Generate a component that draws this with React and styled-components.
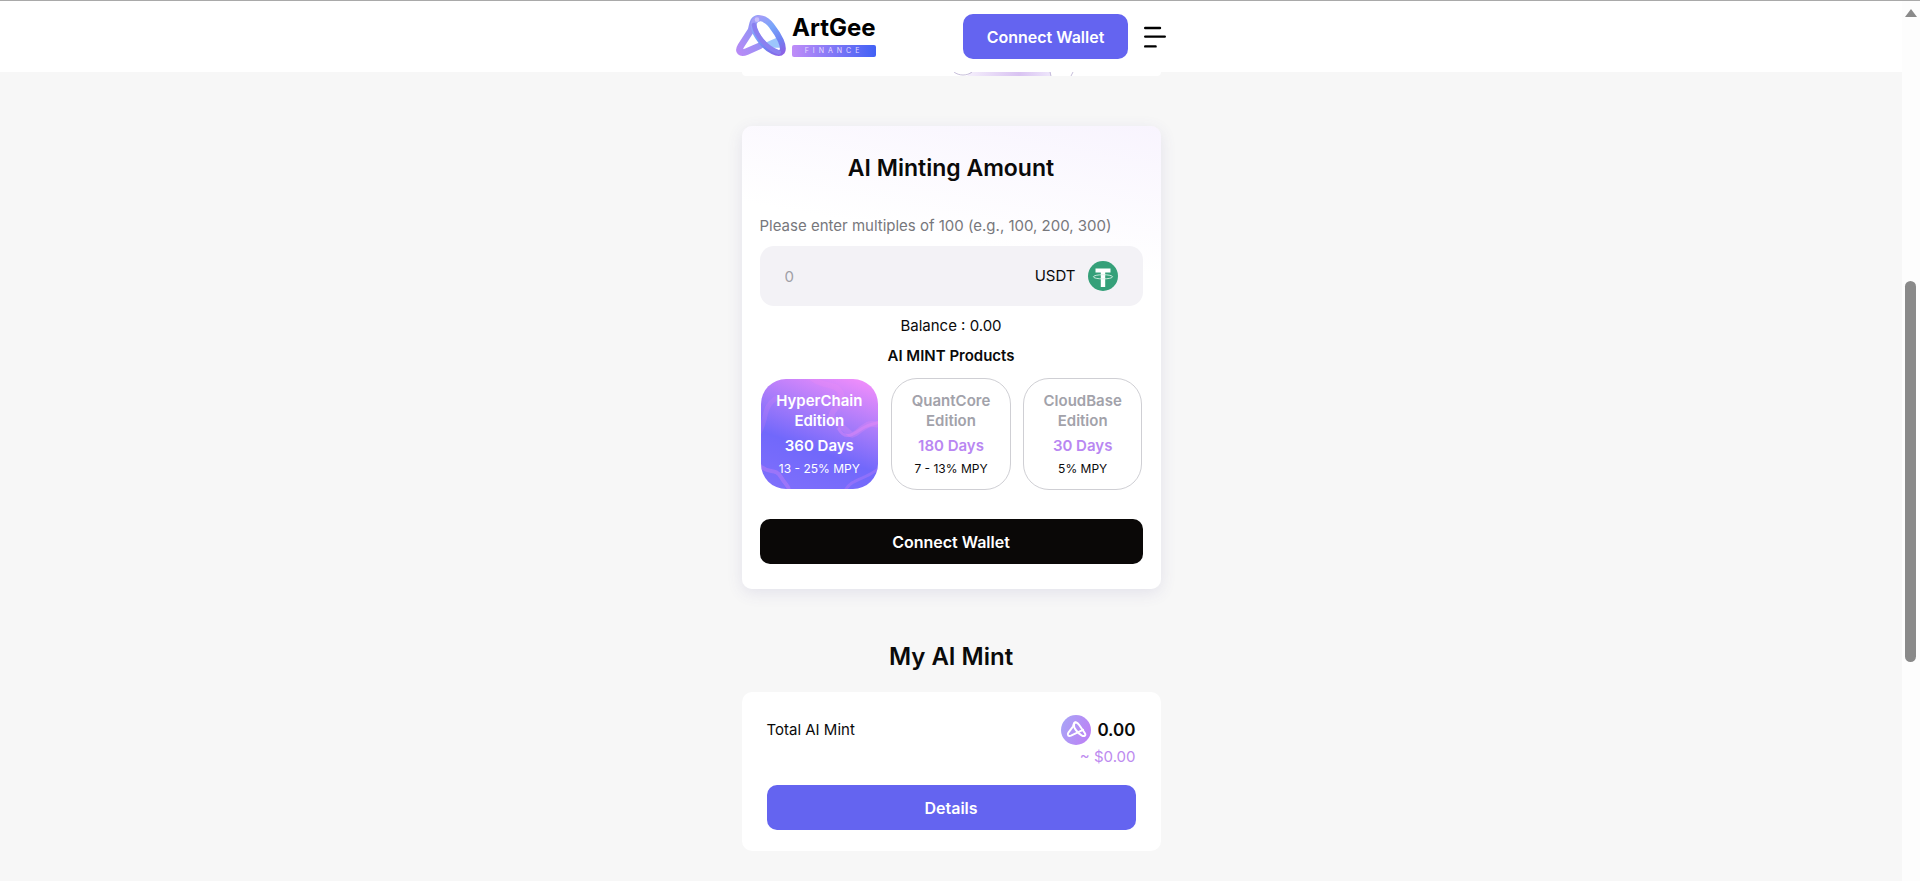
import React, { useState } from 'react';
import styled, { createGlobalStyle, css } from 'styled-components';

const GlobalStyle = createGlobalStyle`
  * {
    box-sizing: border-box;
  }
  body {
    margin: 0;
    background: #f7f7f7;
    color: #0a0a0a;
    font-family: Inter, 'Open Sans', sans-serif;
    font-size: 15px;
    line-height: 20px;
  }
  button,
  input {
    font: inherit;
    color: inherit;
  }
  h1,
  h2,
  h3,
  p {
    margin: 0;
  }
`;

const Screen = styled.div`
  display: grid;
  grid-template-columns: 1fr 18px;
  min-height: 100vh;
  border-top: 1px solid #a9a9a9;
`;

const Page = styled.div`
  display: flex;
  flex-direction: column;
`;

const Header = styled.header`
  background: #fff;
`;

const HeaderInner = styled.div`
  width: 100%;
  max-width: 430px;
  height: 71px;
  margin: 0 auto;
  display: flex;
  align-items: center;
  gap: 16px;
`;

const LogoLink = styled.a`
  display: flex;
  align-items: center;
  gap: 6px;
  margin-right: auto;
  padding-bottom: 2px;
  color: #000;
  text-decoration: none;
`;

const LogoWords = styled.span`
  display: flex;
  flex-direction: column;
  gap: 4px;
  width: 84px;
`;

const LogoName = styled.span`
  font-size: 24px;
  line-height: 26px;
  font-weight: 700;
`;

const LogoTag = styled.span`
  height: 12px;
  border-radius: 2px;
  background: linear-gradient(90deg, #bf8df8, #4161f5);
  color: #e6dcff;
  font-size: 7px;
  line-height: 12px;
  letter-spacing: 4px;
  text-align: center;
`;

const Button = styled.button`
  display: block;
  width: ${(props) => (props.$wide ? '100%' : '165px')};
  height: 45px;
  padding: 0;
  border: 0;
  border-radius: 10px;
  background: ${(props) => (props.$dark ? '#0a0807' : '#6464f0')};
  color: #fff;
  font-size: 16px;
  font-weight: 600;
  cursor: pointer;
  &:hover {
    opacity: 0.9;
  }
`;

const MenuButton = styled.button`
  display: flex;
  padding: 0;
  border: 0;
  background: none;
  cursor: pointer;
`;

const Main = styled.main`
  width: 100%;
  max-width: 429px;
  margin: 0 auto;
  padding: 0 5px 30px;
`;

// 이전 카드의 아래쪽 끝
const PrevCard = styled.div`
  display: flex;
  justify-content: center;
  height: 4px;
  margin-bottom: 50px;
  padding-left: 126px;
  border-radius: 0 0 8px 8px;
  background: #fff;
`;

const Card = styled.section`
  border-radius: 10px;
  background: #fff;
`;

const MintCard = styled(Card)`
  padding: 26px 18px 25px;
  background: linear-gradient(190deg, #f8f4fe 0%, #fff 28%);
  box-shadow: 0 4px 16px rgba(80, 70, 150, 0.12);
`;

const Title = styled.h2`
  font-size: 23px;
  line-height: 32px;
  font-weight: 600;
  text-align: center;
`;

const FieldLabel = styled.label`
  display: block;
  margin: 32px 0 10px;
  color: #77777c;
`;

const AmountBox = styled.div`
  display: flex;
  align-items: center;
  gap: 12px;
  height: 60px;
  padding: 0 25px;
  border-radius: 14px;
  background: #f3f2f6;
`;

const AmountInput = styled.input`
  flex: 1;
  min-width: 0;
  padding: 2px 0 0;
  border: 0;
  outline: 0;
  background: none;
  &::placeholder {
    color: #a0a0a6;
    opacity: 1;
  }
`;

const Balance = styled.p`
  margin-top: 10px;
  text-align: center;
`;

const SubTitle = styled.h3`
  margin: 10px 0 12px;
  font-size: 15px;
  font-weight: 600;
  text-align: center;
`;

const Products = styled.div`
  display: grid;
  grid-template-columns: repeat(3, 1fr);
  gap: 12px;
  margin-bottom: 29px;
`;

const ProductName = styled.span`
  color: #a2a2aa;
  font-weight: 600;
`;

const ProductDays = styled.span`
  margin-top: 5px;
  color: #b987f2;
  font-weight: 600;
`;

const ProductRate = styled.span`
  margin-top: 3px;
  color: #0a0a0a;
  font-size: 12px;
`;

const ProductButton = styled.button`
  position: relative;
  display: flex;
  flex-direction: column;
  align-items: center;
  justify-content: center;
  height: 112px;
  padding: 2px 0 0;
  border: 1px solid #cfcfd4;
  border-radius: 26px;
  background: #fff;
  overflow: hidden;
  cursor: pointer;
  ${(props) =>
    props.$active &&
    css`
      border-color: transparent;
      background: linear-gradient(200deg, #ee8dfb 5%, #a47afa 38%, #7168fb 62%, #8070fb 100%)
        padding-box;
      ${ProductName}, ${ProductDays}, ${ProductRate} {
        position: relative;
        color: #fff;
      }
    `}
`;

const Waves = styled.svg`
  position: absolute;
  inset: 0;
  width: 100%;
  height: 100%;
`;

const SectionTitle = styled(Title)`
  margin: 52px 0 19px;
  font-size: 24px;
`;

const TotalCard = styled(Card)`
  padding: 22px 25px 21px;
`;

const TotalRow = styled.div`
  display: flex;
  justify-content: space-between;
  margin-bottom: 17px;
  line-height: 32px;
`;

const TotalValue = styled.div`
  display: flex;
  align-items: center;
  gap: 6px;
  font-size: 17px;
  font-weight: 600;
`;

const TotalUsd = styled.p`
  color: #bd8bef;
  line-height: 22px;
  text-align: right;
`;

const ScrollTrack = styled.div`
  display: flex;
  flex-direction: column;
  align-items: center;
  padding: 8px 1px 0 0;
  background: #fdfdfd;
`;

const ScrollThumb = styled.div`
  width: 11px;
  height: 381px;
  margin-top: 264px;
  border-radius: 6px;
  background: #8a8a8a;
`;

const products = [
  { name: ['HyperChain', 'Edition'], days: '360 Days', rate: '13 - 25% MPY' },
  { name: ['QuantCore', 'Edition'], days: '180 Days', rate: '7 - 13% MPY' },
  { name: ['CloudBase', 'Edition'], days: '30 Days', rate: '5% MPY' },
];

function LogoMark() {
  return (
    <svg width="50" height="42" viewBox="0 0 150 126" fill="none">
      <defs>
        <linearGradient id="arm" x1="0" y1="110" x2="110" y2="20" gradientUnits="userSpaceOnUse">
          <stop offset="0" stopColor="#b98af6" />
          <stop offset="0.6" stopColor="#9193f5" />
          <stop offset="1" stopColor="#8fb5fb" />
        </linearGradient>
        <linearGradient id="ring" x1="60" y1="10" x2="130" y2="120" gradientUnits="userSpaceOnUse">
          <stop offset="0" stopColor="#a59cf8" />
          <stop offset="0.35" stopColor="#79a6fa" />
          <stop offset="0.7" stopColor="#6f83f2" />
          <stop offset="1" stopColor="#8b62e6" />
        </linearGradient>
      </defs>
      <path d="M78 88L122 68L136 98L112 98Z" fill="#9cc6fc" />
      <path
        d="M66 10C48 12 50 32 45 46L15 92C4 110 14 118 32 110L72 92"
        stroke="url(#arm)"
        strokeWidth="20"
        strokeLinecap="round"
      />
      <path
        d="M54 24C60 2 88 6 108 34C130 62 147 96 138 110C128 122 96 106 76 80C60 60 50 38 54 24Z"
        stroke="url(#ring)"
        strokeWidth="18"
      />
      <path d="M54 30C60 60 88 98 128 112" stroke="#8a80f0" strokeWidth="14" strokeLinecap="round" />
      <circle cx="63" cy="14" r="7" fill="#c9c0fb" />
    </svg>
  );
}

function MenuIcon() {
  return (
    <svg width="22" height="22" viewBox="0 0 22 22" stroke="#000" strokeWidth="2.4" strokeLinecap="round">
      <path d="M1.2 2H16M1.2 10.6H20.8M1.2 20.4H11.6" />
    </svg>
  );
}

function TetherIcon() {
  return (
    <svg width="30" height="30" viewBox="0 0 30 30">
      <circle cx="15" cy="15" r="15" fill="#35a079" />
      <path d="M7.5 7.5H22.5V11.6H17.2V26H12.8V11.6H7.5Z" fill="#fff" />
      <ellipse cx="15" cy="15.8" rx="9.6" ry="2.1" fill="none" stroke="#d9f1e7" strokeWidth="0.9" />
    </svg>
  );
}

function TokenIcon() {
  return (
    <svg width="30" height="30" viewBox="0 0 30 30" fill="none">
      <defs>
        <linearGradient id="token" x1="0" y1="10" x2="30" y2="22" gradientUnits="userSpaceOnUse">
          <stop offset="0" stopColor="#a9a3f6" />
          <stop offset="1" stopColor="#bd80f5" />
        </linearGradient>
      </defs>
      <circle cx="15" cy="15" r="15" fill="url(#token)" />
      <g stroke="#fff" strokeWidth="2" strokeLinecap="round">
        <path d="M14.5 7.2C12.4 7.2 12.8 10 12 11.5L7.4 17.6C5.8 20.2 7.6 21.600 10 20.600L22 14.800" />
        <path d="M13 9C14 6.400 16.400 7.400 18.200 10L23.600 17.800C25.400 20.600 23.400 22 20.600 20.400C16.600 18 12 12.400 13 9Z" />
      </g>
    </svg>
  );
}

function CardArt() {
  return (
    <svg width="122" height="4" viewBox="0 0 122 4" fill="none">
      <defs>
        <linearGradient id="art" x1="18" x2="98" gradientUnits="userSpaceOnUse">
          <stop offset="0" stopColor="#f3ecfb" />
          <stop offset="0.6" stopColor="#d9c3f2" />
          <stop offset="1" stopColor="#eee6fb" />
        </linearGradient>
      </defs>
      <path d="M18 0H98V4H14Z" fill="url(#art)" />
      <path d="M1 0C6 4 14 4 19 0M97 0L98 4M120 0L118 4" stroke="#b9aed0" strokeWidth="0.8" />
    </svg>
  );
}

function CardWaves() {
  return (
    <Waves viewBox="0 0 118 110" preserveAspectRatio="none" fill="none">
      <g stroke="#f08cf5" strokeLinecap="round">
        <path d="M50 -2C62 10 74 2 80 14S60 34 76 44S88 60 98 52S110 44 120 46" strokeWidth="6" opacity="0.25" />
        <path d="M78 50C86 64 96 52 104 48S114 46 120 42" strokeWidth="3" opacity="0.35" />
        <path d="M-2 86C8 96 14 88 20 98S28 106 28 112" strokeWidth="4" opacity="0.28" />
        <path d="M84 112C92 98 104 102 120 88" strokeWidth="3" opacity="0.22" />
        <path d="M-2 54C6 40 2 28 14 20" strokeWidth="5" opacity="0.15" />
      </g>
    </Waves>
  );
}

export default function App() {
  const [amount, setAmount] = useState('');
  const [selected, setSelected] = useState(0);

  return (
    <>
      <GlobalStyle />
      <Screen>
        <Page>
          <Header>
            <HeaderInner>
              <LogoLink href="#">
                <LogoMark />
                <LogoWords>
                  <LogoName>ArtGee</LogoName>
                  <LogoTag>FINANCE</LogoTag>
                </LogoWords>
              </LogoLink>
              <Button>Connect Wallet</Button>
              <MenuButton aria-label="Menu">
                <MenuIcon />
              </MenuButton>
            </HeaderInner>
          </Header>

          <Main>
            <PrevCard>
              <CardArt />
            </PrevCard>

            <MintCard>
              <Title>AI Minting Amount</Title>
              <FieldLabel htmlFor="amount">
                Please enter multiples of 100 (e.g., 100, 200, 300)
              </FieldLabel>
              <AmountBox>
                <AmountInput
                  id="amount"
                  type="text"
                  inputMode="numeric"
                  placeholder="0"
                  value={amount}
                  onChange={(e) => setAmount(e.target.value)}
                />
                <span>USDT</span>
                <TetherIcon />
              </AmountBox>
              <Balance>Balance : 0.00</Balance>
              <SubTitle>AI MINT Products</SubTitle>
              <Products>
                {products.map((item, i) => (
                  <ProductButton
                    key={item.days}
                    $active={selected === i}
                    aria-pressed={selected === i}
                    onClick={() => setSelected(i)}
                  >
                    {selected === i && <CardWaves />}
                    <ProductName>
                      {item.name[0]}
                      <br />
                      {item.name[1]}
                    </ProductName>
                    <ProductDays>{item.days}</ProductDays>
                    <ProductRate>{item.rate}</ProductRate>
                  </ProductButton>
                ))}
              </Products>
              <Button $wide $dark>
                Connect Wallet
              </Button>
            </MintCard>

            <SectionTitle>My AI Mint</SectionTitle>
            <TotalCard>
              <TotalRow>
                <p>Total AI Mint</p>
                <div>
                  <TotalValue>
                    <TokenIcon />
                    0.00
                  </TotalValue>
                  <TotalUsd>~ $0.00</TotalUsd>
                </div>
              </TotalRow>
              <Button $wide>Details</Button>
            </TotalCard>
          </Main>
        </Page>

        <ScrollTrack>
          <svg width="12" height="8" viewBox="0 0 12 8">
            <path d="M6 0L12 8H0Z" fill="#8a8a8a" />
          </svg>
          <ScrollThumb />
        </ScrollTrack>
      </Screen>
    </>
  );
}
